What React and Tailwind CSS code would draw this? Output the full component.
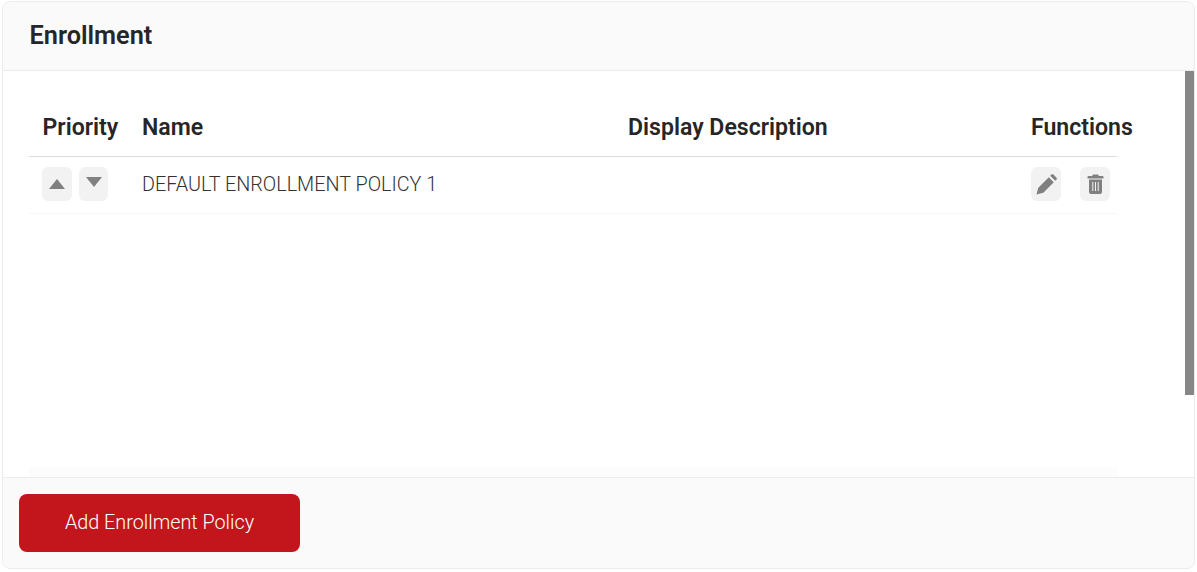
const IconButton = ({ className = "w-[30px]", children }) => (
  <button className={`h-[34px] flex items-center justify-center rounded-md bg-[#f2f2f2] text-[#808080] ${className}`}>
    {children}
  </button>
);

const App = () => {
  return (
    <div className="w-[1197px] h-[572px] pt-px pb-[3px] px-[2px] bg-white font-['Roboto',sans-serif] text-[#262626]">
      <div className="h-full flex flex-col border border-[#ececec] rounded-lg overflow-hidden">
        {/* Header */}
        <div className="h-[69px] shrink-0 flex items-center pl-[26.5px] bg-[#fafafa] border-b border-[#ececec]">
          <h1 className="text-[25.3px] font-semibold">Enrollment</h1>
        </div>

        {/* Body */}
        <div className="flex-1 flex min-h-0 bg-white">
          <div className="flex-1 min-w-0 flex flex-col pl-[26px] pr-[68px]">
            <div className="h-[86px] shrink-0 flex items-end border-b border-[#dcdcdc] text-[23.1px] font-semibold whitespace-nowrap">
              <div className="w-[113px] shrink-0 pl-[13.5px] pb-[14px] leading-[28px]">Priority</div>
              <div className="w-[486px] shrink-0 pb-[14px] leading-[28px]">Name</div>
              <div className="w-[403px] shrink-0 pb-[14px] leading-[28px]">Display Description</div>
              <div className="pb-[14px] leading-[28px]">Functions</div>
            </div>
            <div className="h-[57px] shrink-0 flex items-center border-b border-[#f7f7f7]">
              <div className="w-[113px] shrink-0 pl-[13px] -mt-[2px] flex gap-[7px]">
                <IconButton>
                  <svg width="16" height="10" viewBox="0 0 16 10" fill="currentColor"><path d="M8 0 L16 10 H0 Z" /></svg>
                </IconButton>
                <IconButton className="w-[29px]">
                  <svg width="16" height="10" viewBox="0 0 16 10" fill="currentColor" className="-mt-[4px]"><path d="M0 0 H16 L8 10 Z" /></svg>
                </IconButton>
              </div>
              <div className="w-[486px] shrink-0 text-[19.8px] font-light text-[#333333]">DEFAULT ENROLLMENT POLICY 1</div>
              <div className="w-[403px] shrink-0" />
              <div className="flex gap-[19px] shrink-0 -mt-[2px]">
                <IconButton>
                  <svg width="21" height="21" viewBox="0 0 23 23" fill="currentColor">
                    <path d="M0.5 22.5 L2.5 15 L14 3.5 L19.5 9 L8 20.5 Z" />
                    <path d="M15.5 2 L17 0.5 Q18 -0.3 19 0.5 L22.5 4 Q23.3 5 22.5 6 L21 7.5 Z" />
                  </svg>
                </IconButton>
                <IconButton>
                  <svg width="17" height="20" viewBox="0 0 16 20" fill="currentColor">
                    <path fillRule="evenodd" d="M5.5 0.5 H10.5 L11.5 2 H15 A1 1 0 0 1 16 3 V4.5 H0 V3 A1 1 0 0 1 1 2 H4.5 Z M1.5 5.5 H14.5 V18 A2 2 0 0 1 12.5 20 H3.5 A2 2 0 0 1 1.5 18 Z M4.8 8 V17 H5.8 V8 Z M7.5 8 V17 H8.5 V8 Z M10.2 8 V17 H11.2 V8 Z" />
                  </svg>
                </IconButton>
              </div>
            </div>
            <div className="flex-1" />
            <div className="h-[10px] shrink-0 bg-[#fcfcfc]" />
          </div>
          {/* Scrollbar */}
          <div className="w-[9px] shrink-0">
            <div className="h-[324px] bg-[#878787]" />
          </div>
        </div>

        {/* Footer */}
        <div className="h-[91px] shrink-0 flex items-start pt-4 pl-4 bg-[#fafafa] border-t border-[#ececec]">
          <button className="w-[281px] h-[58px] rounded-lg bg-[#c2161c] text-white text-[19.8px] font-light">
            Add Enrollment Policy
          </button>
        </div>
      </div>
    </div>
  );
};

export default App;
